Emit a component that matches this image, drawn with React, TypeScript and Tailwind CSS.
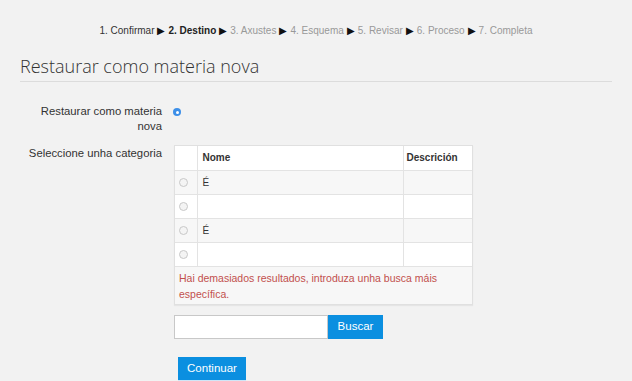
export default function App() {
  const rows = ["É", "", "É", ""];
  const steps = [
    { t: "1. Confirmar", c: "text-[#333]" },
    { t: "2. Destino", c: "font-bold text-[#222]" },
    { t: "3. Axustes", c: "text-[#999]" },
    { t: "4. Esquema", c: "text-[#999]" },
    { t: "5. Revisar", c: "text-[#999]" },
    { t: "6. Proceso", c: "text-[#999]" },
    { t: "7. Completa", c: "text-[#999]" },
  ];
  return (
    <div className="min-h-[381px] w-[632px] overflow-hidden bg-[#f2f2f2] font-['Liberation_Sans',Arial,sans-serif] text-[#333]">
      {/* Steps */}
      <div className="flex justify-center pt-[25px] text-[10px] leading-[12px]">
        {steps.map((s, i) => (
          <span key={i} className="flex">
            {i > 0 && <span className="mx-[3px] text-[#111]">▶</span>}
            <span className={s.c}>{s.t}</span>
          </span>
        ))}
      </div>

      {/* Heading */}
      <div className="mx-[20px] mt-[18px] border-b border-[#dcdcdc] pb-[4px]">
        <h2 className="font-['Open_Sans',sans-serif] text-[18px] leading-[22px] font-light text-[#333]">
          Restaurar como materia nova
        </h2>
      </div>

      {/* Form */}
      <div className="mt-[22px] flex flex-col text-[11.3px] leading-[15px]">
        <div className="flex">
          <div className="w-[162px] shrink-0 pl-[36px] text-right">Restaurar como materia nova</div>
          <div className="pl-[11px] pt-[4px]">
            <span className="flex h-[8px] w-[8px] items-center justify-center rounded-full bg-[#3d8fe8]">
              <span className="h-[3px] w-[3px] rounded-full bg-white" />
            </span>
          </div>
        </div>

        <div className="mt-[11px] flex">
          <div className="w-[162px] shrink-0 pt-[1px] text-right">Seleccione unha categoria</div>
          <div className="ml-[12px] flex flex-col">
            <div className="w-[299px] border border-[#e0e0e0] bg-white shadow-[0_1px_1px_rgba(0,0,0,0.05)]">
              <table className="w-full border-collapse text-[10px]">
                <thead>
                  <tr className="h-[24px] bg-white">
                    <th className="w-[22px] border-r border-b border-[#e3e3e3]" />
                    <th className="w-[206px] border-r border-b border-[#e3e3e3] pl-[5px] text-left font-bold">Nome</th>
                    <th className="border-b border-[#e3e3e3] pl-[3px] text-left font-bold">Descrición</th>
                  </tr>
                </thead>
                <tbody>
                  {rows.map((r, i) => (
                    <tr key={i} className={`h-[24px] ${i % 2 === 0 ? "bg-[#f7f7f7]" : "bg-white"}`}>
                      <td className="border-r border-b border-[#e3e3e3] pl-[4px]">
                        <span className="block h-[9px] w-[9px] rounded-full border border-[#c8c8c8] bg-[#f4f4f4]" />
                      </td>
                      <td className="border-r border-b border-[#e3e3e3] pl-[5px]">{r}</td>
                      <td className="border-b border-[#e3e3e3]" />
                    </tr>
                  ))}
                </tbody>
              </table>
              <div className="bg-[#f7f7f7] px-[4px] pt-[3px] pb-[2px] text-[10.5px] leading-[16px] text-[#c2504d]">
                Hai demasiados resultados, introduza unha busca máis específica.
              </div>
            </div>

            <div className="mt-[10px] flex h-[24px]">
              <input className="h-[24px] w-[154px] border border-[#c8c8c8] bg-white outline-none" />
              <button className="h-[24px] w-[55px] bg-[#0b8fe0] text-[11.5px] text-white">Buscar</button>
            </div>

            <div className="mt-[18px] pl-[4px]">
              <button className="h-[24px] w-[68px] border-b border-[#cfe6f7] bg-[#0b8fe0] text-[11.5px] text-white">
                Continuar
              </button>
            </div>
          </div>
        </div>
      </div>
    </div>
  );
}
